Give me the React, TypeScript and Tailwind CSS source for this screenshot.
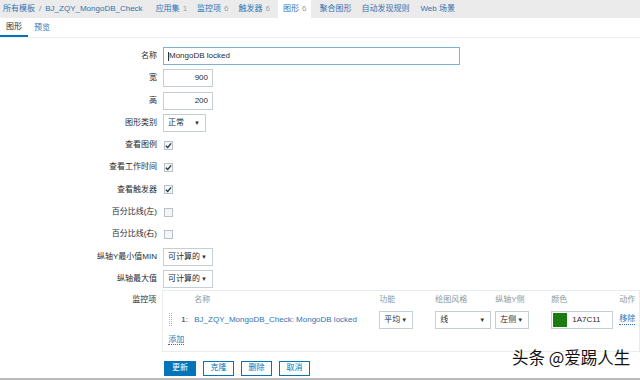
import React from "react";

const font = "font-['Liberation_Sans','Noto_Sans_CJK_SC',sans-serif]";

const Caret = () => <span className="text-[6px] leading-none text-[#333]">▼</span>;

const Select = ({ value, width }: { value: string; width: string }) => (
  <div className={`${width} h-[18px] border border-[#c5ced3] bg-white flex items-center justify-between pl-[4px] pr-[5px] text-[8px] text-[#1f2c33] whitespace-nowrap`}>
    <span>{value}</span>
    <Caret />
  </div>
);

const Check = ({ checked }: { checked: boolean }) => (
  <div className="w-[9px] h-[9px] ml-[1px] border border-[#b8c3c9] bg-[#f3f5f6] flex items-center justify-center">
    {checked && (
      <svg width="7" height="7" viewBox="0 0 8 8">
        <path d="M1 4.2 L3.1 6.3 L7 1.5" fill="none" stroke="#2b3a42" strokeWidth="1.5" />
      </svg>
    )}
  </div>
);

const Row = ({ label, children }: { label: string; children: React.ReactNode }) => (
  <div className="flex items-center h-[18px]">
    <div className="w-[158px] text-right pr-[1px] text-[8px] text-[#1f2c33] whitespace-nowrap">{label}</div>
    <div className="ml-[5px] flex items-center">{children}</div>
  </div>
);

const tabs = [
  { t: "应用集", n: "1" },
  { t: "监控项", n: "6" },
  { t: "触发器", n: "6" },
];

export default function App() {
  return (
    <div className={`${font} relative w-[640px] h-[380px] bg-white overflow-hidden whitespace-nowrap`}>
      {/* top nav */}
      <div className="h-[18px] bg-[#ebebeb] flex items-stretch text-[8px] text-[#2f73b4]">
        <div className="flex items-center pl-[3px] pr-[8px]">
          <span>所有模板</span>
          <span className="text-[#888] mx-[4px]">/</span>
          <span>BJ_ZQY_MongoDB_Check</span>
        </div>
        {tabs.map((x) => (
          <div key={x.t} className="flex items-center px-[5px]">
            {x.t}
            <span className="text-[#9aa5ab] ml-[3px]">{x.n}</span>
          </div>
        ))}
        <div className="flex items-center px-[5px] mx-[3px] bg-white">
          图形<span className="text-[#9aa5ab] ml-[3px]">6</span>
        </div>
        <div className="flex items-center px-[5px]">聚合图形</div>
        <div className="flex items-center px-[5px]">自动发现规则</div>
        <div className="flex items-center px-[6px]">Web 场景</div>
      </div>

      {/* sub tabs */}
      <div className="h-[20px] flex items-stretch text-[8px] border-b border-[#eef1f2]">
        <div className="w-[28px] pl-[6px] flex items-center text-[#1f2c33] border-b-[2px] border-[#0275b8]">图形</div>
        <div className="pl-[6px] flex items-center text-[#2f73b4]">预览</div>
      </div>

      {/* form */}
      <div className="pt-[9px] flex flex-col gap-[4.3px]">
        <Row label="名称">
          <div className="w-[297px] h-[18px] border border-[#7fb1d6] bg-white flex items-center pl-[4px] text-[8px] text-[#1f2c33]">
            <span className="w-px h-[9px] bg-[#333]" />
            MongoDB locked
          </div>
        </Row>
        <Row label="宽">
          <div className="w-[50px] h-[18px] border border-[#c5ced3] bg-white flex items-center justify-end pr-[4px] text-[8px] text-[#1f2c33]">900</div>
        </Row>
        <Row label="高">
          <div className="w-[50px] h-[18px] border border-[#c5ced3] bg-white flex items-center justify-end pr-[4px] text-[8px] text-[#1f2c33]">200</div>
        </Row>
        <Row label="图形类别">
          <Select value="正常" width="w-[43px]" />
        </Row>
        <Row label="查看图例"><Check checked /></Row>
        <Row label="查看工作时间"><Check checked /></Row>
        <Row label="查看触发器"><Check checked /></Row>
        <Row label="百分比线(左)"><Check checked={false} /></Row>
        <Row label="百分比线(右)"><Check checked={false} /></Row>
        <Row label="纵轴Y最小值MIN">
          <Select value="可计算的" width="w-[50px]" />
        </Row>
        <Row label="纵轴最大值">
          <Select value="可计算的" width="w-[50px]" />
        </Row>
      </div>

      {/* items */}
      <div className="flex mt-[2px]">
        <div className="w-[158px] text-right pr-[1px] text-[8px] text-[#1f2c33] pt-[4px]">监控项</div>
        <div className="ml-[5px] w-[480px] h-[62px] border border-[#e7ecee] pl-[5px] pt-[2px] text-[8px]">
          <div className="flex text-[#8a9aa2] h-[14px] items-center">
            <span className="ml-[26px] w-[185px]">名称</span>
            <span className="w-[56px]">功能</span>
            <span className="w-[60px]">绘图风格</span>
            <span className="w-[56px]">纵轴Y侧</span>
            <span className="w-[68px]">颜色</span>
            <span>动作</span>
          </div>
          <div className="flex items-center h-[18px] mt-[4px]">
            <div className="w-[3px] h-[13px] border-x border-dotted border-[#aab5bb] ml-[1px]" />
            <span className="ml-[9px] w-[13px] text-[#1f2c33]">1:</span>
            <span className="w-[185px] text-[#2f73b4]">BJ_ZQY_MongoDB_Check: MongoDB locked</span>
            <div className="w-[56px]"><Select value="平均" width="w-[34px]" /></div>
            <div className="w-[60px]"><Select value="线" width="w-[56px]" /></div>
            <div className="w-[56px]"><Select value="左侧" width="w-[34px]" /></div>
            <div className="w-[68px] flex">
              <div className="w-[62px] h-[18px] border border-[#c5ced3] bg-white flex items-center">
                <div className="w-[14px] h-[14px] ml-[1px] bg-[#1a7c11]" />
                <span className="ml-[5px] text-[#1f2c33]">1A7C11</span>
              </div>
            </div>
            <span className="text-[#2f73b4] border-b border-dotted border-[#2f73b4] leading-[10px]">移除</span>
          </div>
          <div className="mt-[5px]">
            <span className="text-[#2f73b4] border-b border-dotted border-[#2f73b4] leading-[10px]">添加</span>
          </div>
        </div>
      </div>

      {/* buttons */}
      <div className="flex gap-[7px] ml-[164px] mt-[9px] text-[8px]">
        <button className="w-[32px] h-[15px] bg-[#0275b8] text-white border border-[#0275b8] flex items-center justify-center">更新</button>
        <button className="w-[31px] h-[15px] bg-white text-[#0275b8] border border-[#0275b8] flex items-center justify-center">克隆</button>
        <button className="w-[31px] h-[15px] bg-white text-[#0275b8] border border-[#0275b8] flex items-center justify-center">删除</button>
        <button className="w-[31px] h-[15px] bg-white text-[#0275b8] border border-[#0275b8] flex items-center justify-center">取消</button>
      </div>

      <div className="absolute left-0 right-0 bottom-0 h-[2px] bg-[#b9b9b9]" />

      {/* watermark */}
      <div className="absolute left-[512px] top-[347px] text-[16.5px] leading-[20px] text-[#111] font-['Noto_Sans_CJK_SC',sans-serif] [text-shadow:0_0_2px_#fff,0_0_2px_#fff]">
        头条 @爱踢人生
      </div>
    </div>
  );
}
